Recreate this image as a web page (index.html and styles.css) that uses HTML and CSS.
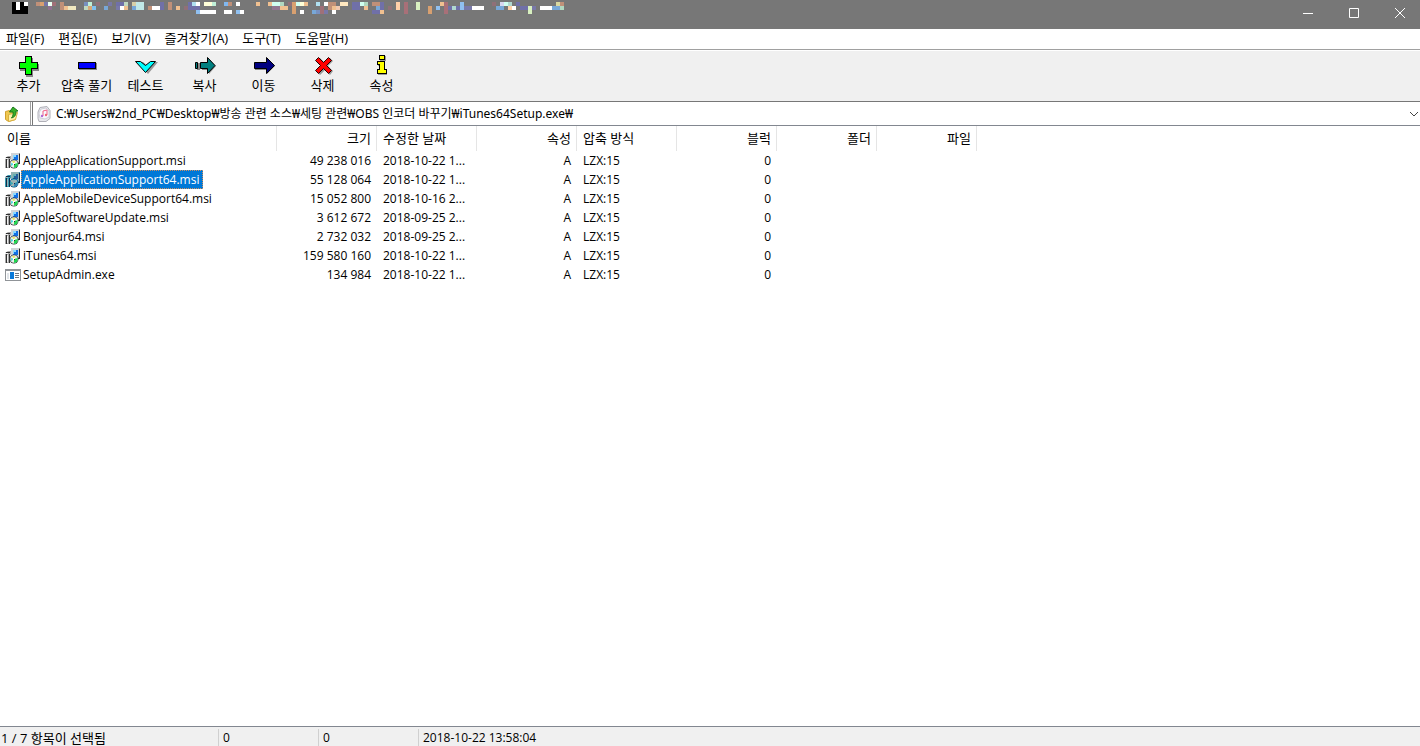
FILE: index.html
```html
<!DOCTYPE html>
<html lang="ko">
<head>
  <meta charset="UTF-8">
  <meta name="viewport" content="width=device-width, initial-scale=1.0">
  <title>iTunes64Setup.exe</title>
  <link rel="stylesheet" href="styles.css">
</head>
<body>
  <!-- Shared file icons -->
  <svg class="icon-defs" width="0" height="0" aria-hidden="true">
    <symbol id="icon-msi" viewBox="0 0 16 16">
      <path fill="#909498" d="M6 0h9v10H6z"/>
      <path fill="#d0d4d8" d="M6 0h8v9H6z"/>
      <path fill="#1070e8" d="M8 2h5v5H8z"/>
      <path fill="#88d8ff" d="M8 2h3v2H9v2H8z"/>
      <path fill="#282828" d="M14 1h1v10h-1zM11 10h4v1h-4z"/>
      <path fill="#a8a8a8" d="M0 5l3-2h3v3L5 7v7l-1 1H0z"/>
      <path fill="#f0f0f0" d="M0 5h3v1H0zM2 7h1v7H2z"/>
      <path fill="#303030" d="M1 6h1v9H1zM4 6h1v9H4zM1 4h4v1H1z"/>
      <circle cx="9" cy="11" r="4.500" fill="#383c40"/>
      <circle cx="9" cy="11" r="3.700" fill="#e8f0e8"/>
      <path fill="#20d850" d="M9 11l4-1-1 4-3 1z"/>
      <path fill="#f0e858" d="M9 11l-2-3h3z"/>
      <path fill="#50d8e0" d="M9 11l-3 2v-3z"/>
      <path fill="#fff" d="M8 10h2v2H8z"/>
      <path fill="#303030" d="M9 11h1v1H9z"/>
    </symbol>
    <symbol id="icon-exe" viewBox="0 0 16 16">
      <path fill="#909498" d="M0 2h16v12H0z"/>
      <path fill="#fff" d="M1 4h14v9H1z"/>
      <path fill="#0878d8" d="M5 5h4v7H5z"/>
      <path fill="#e0e4e8" d="M2 6h2v6H2z"/>
      <path fill="#707880" d="M10 6h4v1h-4zM10 8h4v1h-4zM10 10h4v1h-4z"/>
    </symbol>
  </svg>

  <div class="window">
    <header class="title-bar">
      <svg id="title-mosaic" class="title-mosaic" width="580" height="16" shape-rendering="crispEdges" aria-hidden="true"></svg>
      <div class="window-buttons">
        <button type="button" aria-label="최소화"><svg width="12" height="12" shape-rendering="crispEdges"><path d="M1 6h10v1H1z" fill="#fff"/></svg></button>
        <button type="button" aria-label="최대화"><svg width="12" height="12"><path d="M1.500 1.500h9v9h-9z" fill="none" stroke="#fff"/></svg></button>
        <button type="button" aria-label="닫기"><svg width="12" height="12"><path d="M1 1l10 10M11 1L1 11" stroke="#fff"/></svg></button>
      </div>
    </header>

    <nav class="menu-bar">
      <button type="button">파일(F)</button>
      <button type="button">편집(E)</button>
      <button type="button">보기(V)</button>
      <button type="button">즐겨찾기(A)</button>
      <button type="button">도구(T)</button>
      <button type="button">도움말(H)</button>
    </nav>

    <div class="toolbar">
      <button type="button">
        <svg width="24" height="24" shape-rendering="crispEdges"><path fill="#888" d="M9 4h7v6h6v7h-6v6H9v-6H3v-7h6z"/><path fill="#000" d="M8 2h7v6h6v7h-6v6H8v-6H2V8h6z"/><path fill="#0f0" d="M9 3h5v6h6v5h-6v6H9v-6H3V9h6z"/></svg>
        <span>추가</span>
      </button>
      <button type="button">
        <svg width="24" height="24" shape-rendering="crispEdges"><path fill="#888" d="M4 9h18v7H4z"/><path fill="#000" d="M3 8h18v7H3z"/><path fill="#00f" d="M4 9h16v5H4z"/></svg>
        <span>압축 풀기</span>
      </button>
      <button type="button">
        <svg width="24" height="24"><path fill="#999" d="M3 8h6l5 4 5-4h5L14 20z"/><path fill="#0ff" stroke="#000" d="M1.500 7.500h5l5 4 5-4h5l-10 11z"/></svg>
        <span>테스트</span>
      </button>
      <button type="button">
        <svg width="24" height="24"><path fill="#888" d="M4 9h3v7H4zM9 9h7V5l7 7-7 8v-4H9z"/><path fill="#008080" stroke="#000" d="M2.500 8.500h2v6h-2zM7.500 8.500h7v-5l7.500 8-7.500 8v-5h-7z"/></svg>
        <span>복사</span>
      </button>
      <button type="button">
        <svg width="24" height="24"><path fill="#888" d="M3 9h12V5l8 7-8 8v-4H3z"/><path fill="#000080" stroke="#000" d="M2.500 8.500h12v-5l8 8-8 8v-5h-12z"/></svg>
        <span>이동</span>
      </button>
      <button type="button">
        <svg width="24" height="24"><path fill="#999" d="M6 6l3-2 5 5 5-5 3 3-5 5 5 5-3 4-5-5-5 5-4-4 5-5z"/><path fill="#f00" stroke="#200" d="M4.500 6.500l3-3 5 5 5-5 3 3-5 5 5 5-3 3-5-5-5 5-3-3 5-5z"/></svg>
        <span>삭제</span>
      </button>
      <button type="button">
        <svg width="24" height="24" shape-rendering="crispEdges"><path fill="#999" d="M10 2h6v5h-6zM8 8h7v8h2v5H8v-5h2v-4H8z"/><path fill="#000" d="M9 1h6v5H9zM7 7h8v8h2v5H7v-5h2v-4H7z"/><path fill="#ff0" d="M10 2h4v3h-4zM8 8h6v8h2v3H8v-3h2v-6H8z"/></svg>
        <span>속성</span>
      </button>
    </div>

    <div class="address-bar">
      <button type="button" class="up-button" aria-label="상위 폴더">
        <svg width="16" height="16"><path fill="#f0c850" stroke="#d0a030" d="M1.500 5.500l4-1 1 1h5v8l-7 2-3-2z"/><path fill="#fff0a8" stroke="#d8b040" d="M4.500 8.500l9-2-2 7-7 2z"/><path fill="#38b028" stroke="#187818" d="M9 1l5 4h-2c0 4-1 6-4.500 7 1.500-2 2-4 1.500-6H5.500z"/></svg>
      </button>
      <div class="path-box">
        <svg width="16" height="16"><path fill="#e8e8ec" stroke="#b0b0b8" d="M4 1.500l7-1 3 4v8l-4 3h-7l-1-3V6z"/><path fill="#f8f8fc" stroke="#d0d0d8" d="M5 3l5-1 3 3v6l-4 2-5-1-1-5z"/><path fill="none" stroke="#f06088" d="M7 10V5l4-1v5"/><circle cx="6" cy="10" r="1.200" fill="#b068d8"/><circle cx="10" cy="9" r="1.200" fill="#f06878"/></svg>
        <input type="text" aria-label="경로" value="C:₩Users₩2nd_PC₩Desktop₩방송 관련 소스₩세팅 관련₩OBS 인코더 바꾸기₩iTunes64Setup.exe₩">
        <button type="button" aria-label="경로 목록"><svg width="10" height="6"><path d="M1 1l4 4 4-4" fill="none" stroke="#444"/></svg></button>
      </div>
    </div>

    <main class="file-list">
      <table>
        <colgroup>
          <col class="col-name">
          <col class="col-data" span="7">
          <col>
        </colgroup>
        <thead>
          <tr>
            <th>이름</th>
            <th class="right">크기</th>
            <th>수정한 날짜</th>
            <th class="right">속성</th>
            <th>압축 방식</th>
            <th class="right">블럭</th>
            <th class="right">폴더</th>
            <th class="right">파일</th>
            <td></td>
          </tr>
        </thead>
        <tbody id="file-rows"></tbody>
      </table>
    </main>

    <footer class="status-bar">
      <div class="status-selection">1 / 7 항목이 선택됨</div>
      <div class="status-size">0</div>
      <div class="status-size">0</div>
      <div>2018-10-22 13:58:04</div>
    </footer>
  </div>

  <script>
    const files = [
      { name: 'AppleApplicationSupport.msi', size: '49 238 016', date: '2018-10-22 1...' },
      { name: 'AppleApplicationSupport64.msi', size: '55 128 064', date: '2018-10-22 1...', selected: true },
      { name: 'AppleMobileDeviceSupport64.msi', size: '15 052 800', date: '2018-10-16 2...' },
      { name: 'AppleSoftwareUpdate.msi', size: '3 612 672', date: '2018-09-25 2...' },
      { name: 'Bonjour64.msi', size: '2 732 032', date: '2018-09-25 2...' },
      { name: 'iTunes64.msi', size: '159 580 160', date: '2018-10-22 1...' },
      { name: 'SetupAdmin.exe', size: '134 984', date: '2018-10-22 1...' }
    ];

    // Title blocks: x, y, width, height, colour
    const blocks = [
      [12,2,16,12,'#000'],[16,2,4,8,'#fff'],[24,2,4,4,'#fff'],
      [36,2,8,4,'#c09078'],[40,2,4,4,'#d8a070'],[44,2,4,4,'#7878a8'],[48,2,4,4,'#e8fff0'],[52,2,4,4,'#a07078'],[48,6,4,4,'#907090'],
      [60,2,4,8,'#c09078'],[64,6,4,4,'#f0c090'],[68,6,8,4,'#f0e8c0'],
      [84,2,4,4,'#7890c0'],[88,2,4,4,'#c0f0d8'],[96,2,4,4,'#907078'],[84,6,4,4,'#c0d8c0'],[88,6,4,4,'#d8a878'],[92,6,4,4,'#80c0f0'],
      [104,6,4,4,'#78a8d8'],[108,2,4,4,'#7878a8'],
      [116,2,8,4,'#7070a8'],[124,2,4,4,'#c0d8c0'],[116,6,4,4,'#7878a8'],[120,6,4,4,'#fff'],[124,6,4,4,'#f0c090'],
      [132,2,4,4,'#d8d0a8'],[132,6,4,4,'#78a8d8'],[136,2,8,8,'#c0e8e8'],
      [148,6,4,4,'#c09078'],[152,6,8,4,'#fff'],[160,2,4,8,'#7070a8'],
      [168,2,4,8,'#c09078'],[176,6,4,4,'#f0c090'],[184,6,4,4,'#907078'],[188,2,4,8,'#7070a8'],[192,2,4,4,'#b0e0f0'],[196,2,4,4,'#fff'],
      [192,6,8,4,'#7070a8'],[196,10,4,4,'#90c0f0'],[200,10,16,4,'#fff'],[204,2,8,4,'#ffffd8'],[212,2,4,4,'#c0f0d8'],
      [224,2,4,4,'#80b8f0'],[228,2,4,4,'#c09078'],[236,2,4,4,'#fff'],[224,10,8,4,'#fff'],[236,10,4,4,'#90c0f0'],[240,10,4,4,'#fff'],
      [256,2,4,4,'#f0c090'],[268,2,4,4,'#f0c090'],[272,2,8,4,'#d0fff0'],[280,2,4,4,'#b0d8c0'],[272,6,8,4,'#907890'],[280,6,8,4,'#f0c090'],
      [288,2,4,4,'#907078'],[292,2,4,12,'#d8a070'],[296,2,4,4,'#d0fff0'],
      [300,2,4,4,'#ffffd8'],[304,2,4,4,'#f0c090'],[300,10,4,4,'#fff'],
      [312,10,4,4,'#78a8d8'],[316,2,4,4,'#b0e0f0'],[316,10,4,4,'#7890c0'],[320,6,4,8,'#a07078'],[324,2,4,4,'#fff'],[324,10,4,4,'#7878a8'],
      [328,2,8,8,'#c09078'],[332,6,4,4,'#f0c090'],[332,10,4,4,'#fff'],[336,6,4,4,'#f0c8b0'],[340,2,8,4,'#ffe8c0'],
      [352,2,8,8,'#7070a8'],[360,2,4,4,'#d0fff0'],[364,2,4,4,'#b0d8c0'],[364,6,4,4,'#f0c090'],
      [372,2,8,4,'#c09078'],[380,2,4,8,'#7070a8'],[376,6,4,4,'#78a8d8'],[372,10,8,4,'#7070a8'],[380,10,4,4,'#f0c090'],
      [388,6,4,4,'#907078'],[396,2,4,8,'#ffd0a8'],[404,2,4,12,'#a87078'],[416,2,4,8,'#d8f0c0'],[428,6,4,8,'#d8a070'],
      [436,6,4,4,'#90c0f0'],[440,2,4,4,'#f0c090'],[444,2,4,12,'#a87078'],[448,6,4,4,'#7070a8'],[452,6,4,4,'#b0d8d0'],[456,6,4,4,'#7070a8'],
      [460,2,4,8,'#90c0f0'],[464,6,8,4,'#7878a8'],[472,6,12,4,'#fff'],
      [492,2,4,4,'#907078'],[496,6,8,4,'#78a8d8'],[500,2,4,4,'#d8d8f0'],[504,2,4,4,'#d0fff0'],[508,2,4,4,'#b0d8d0'],[508,6,4,4,'#ffd0a8'],[512,6,4,4,'#fff'],
      [516,2,4,4,'#7070a8'],[520,6,8,4,'#7070a8'],[528,6,4,8,'#d8f0c0'],[532,6,4,4,'#7878a8'],
      [540,6,12,4,'#fff'],[552,6,8,4,'#78a8d8'],[556,2,4,4,'#d8d8a0'],[560,2,4,4,'#c09078'],[560,6,4,4,'#b0d8c0']
    ];

    document.getElementById('title-mosaic').innerHTML = blocks.map(b =>
      `<rect x="${b[0]}" y="${b[1]}" width="${b[2]}" height="${b[3]}" fill="${b[4]}"/>`).join('');

    // Render the file rows
    document.getElementById('file-rows').innerHTML = files.map(file => {
      const icon = file.name.endsWith('.msi') ? 'icon-msi' : 'icon-exe';
      return `<tr class="${file.selected ? 'selected' : ''}">
        <td><div class="file-name"><svg width="16" height="16"><use href="#${icon}"/></svg><span>${file.name}</span></div></td>
        <td class="right">${file.size}</td>
        <td>${file.date}</td>
        <td class="right">A</td>
        <td>LZX:15</td>
        <td class="right">0</td>
        <td></td><td></td><td></td>
      </tr>`;
    }).join('');
  </script>
</body>
</html>
```
FILE: styles.css
```css
* {
  margin: 0;
  padding: 0;
  box-sizing: border-box;
}

body {
  font-family: "Open Sans", "Noto Sans CJK KR", sans-serif;
  font-size: 12px;
  line-height: 18px;
  color: #000;
  background-color: #fff;
}

button,
input {
  font: inherit;
  color: inherit;
  background: none;
  border: none;
  outline: none;
}

svg {
  display: block;
  flex-shrink: 0;
}

.icon-defs {
  position: absolute;
}

.window {
  display: flex;
  flex-direction: column;
  min-height: 100vh;
}

.title-bar {
  display: flex;
  justify-content: space-between;
  height: 29px;
  background-color: #777;
}

.window-buttons {
  display: flex;
}

.window-buttons button {
  display: flex;
  justify-content: center;
  width: 46px;
  padding: 7px 0 0 5px;
}

.menu-bar {
  display: flex;
  gap: 14px;
  height: 21px;
  padding-left: 6px;
  border-bottom: 1px solid #a0a0a0;
}

.menu-bar button {
  padding-bottom: 2px;
  white-space: nowrap;
}

.toolbar {
  display: flex;
  height: 51px;
  padding-top: 3px;
  line-height: 15px;
  background-color: #f0f0f0;
  border-top: 1px solid #fff;
}

.toolbar button {
  display: flex;
  flex-direction: column;
  align-items: center;
  width: 59px;
  white-space: nowrap;
}

.toolbar button:first-child {
  width: 57px;
}

.toolbar,
.menu-bar,
th,
.status-selection {
  font-size: 13px;
}

.address-bar {
  display: flex;
  height: 24px;
  border-top: 1px solid #777;
}

.up-button {
  width: 31px;
  padding-left: 4px;
  border-right: 1px solid #a0a0a0;
}

.path-box {
  display: flex;
  flex: 1;
  align-items: center;
  margin-left: 1px;
  padding: 0 1px 0 3px;
  border-left: 1px solid #777;
}

.path-box input {
  flex: 1;
  min-width: 0;
  padding-left: 4px;
  font-family: "Noto Sans", "Noto Sans CJK KR", sans-serif;
}

.file-list {
  flex: 1;
  border-top: 1px solid #828790;
}

table {
  width: 100%;
  table-layout: fixed;
  border-collapse: separate;
  border-spacing: 0;
}

.col-name {
  width: 277px;
}

.col-data {
  width: 100px;
}

th {
  height: 25px;
  padding: 0 5px 2px 6px;
  border-right: 1px solid #e5e5e5;
  font-weight: normal;
  text-align: left;
}

th:first-child {
  padding-left: 7px;
}

tbody td {
  height: 19px;
  padding: 0 6px;
  white-space: nowrap;
}

tbody td:first-child {
  padding-left: 5px;
}

.right {
  text-align: right;
}

.file-name {
  display: flex;
  align-items: center;
}

.file-name span {
  height: 19px;
  padding: 0 3px 0 1px;
  line-height: 17px;
  border: 1px solid transparent;
}

.selected .file-name span {
  color: #fff;
  background-color: #0078d7;
  border: 1px dotted #d09060;
}

.selected svg {
  filter: sepia(1) hue-rotate(170deg) saturate(4) brightness(0.7);
}

.status-bar {
  display: flex;
  height: 20px;
  padding-top: 2px;
  background-color: #f0f0f0;
  border-top: 1px solid #828790;
}

.status-bar div {
  padding-left: 4px;
  white-space: nowrap;
}

.status-bar div + div {
  border-left: 1px solid #d0d0d0;
}

.status-bar .status-selection {
  width: 218px;
  padding-left: 1px;
}

.status-size {
  width: 100px;
}
```
